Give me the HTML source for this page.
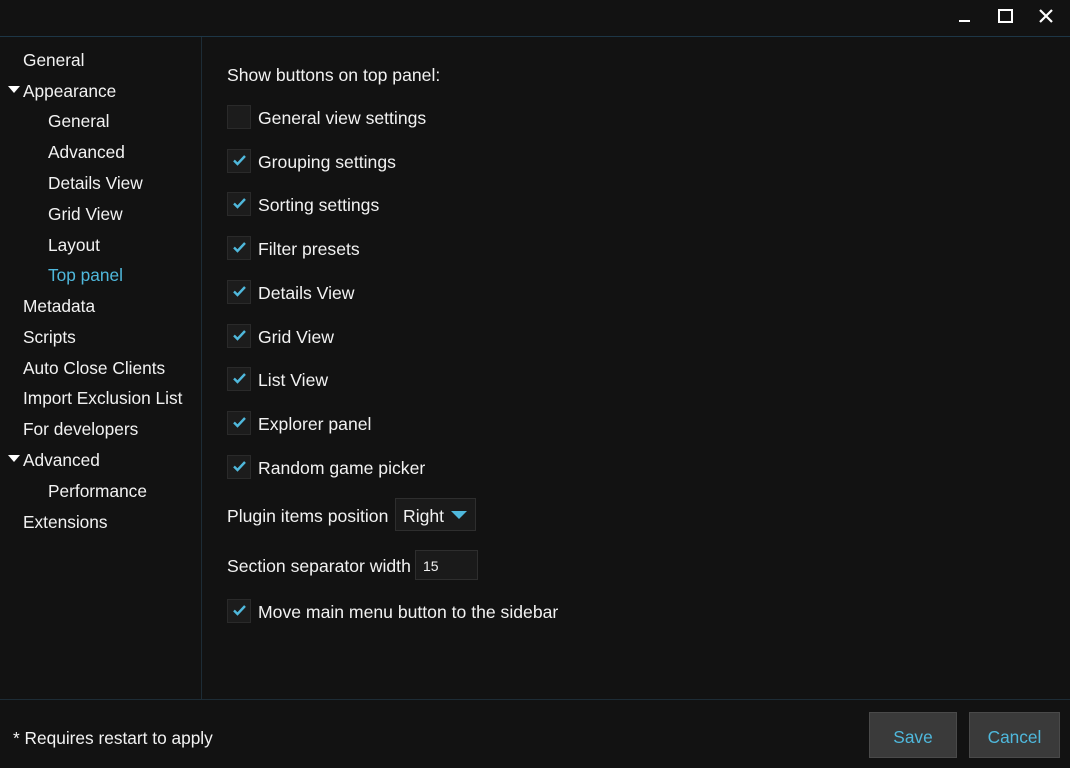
<!DOCTYPE html>
<html><head><style>
*{margin:0;padding:0;box-sizing:border-box}
body{width:1070px;height:768px;background:#121212;color:#f2f2f2;font-family:"Liberation Sans",sans-serif;font-size:17.3px;position:relative;overflow:hidden}
.a{position:absolute;white-space:nowrap;line-height:20px}
.m{font-size:17.6px}
.cb{position:absolute;left:227px;width:24px;height:24px;background:#1c1c1c;border:1px solid #2a2a2a}
.cb svg{position:absolute;left:5px;top:5px}
.btn{position:absolute;top:712px;height:46px;background:#3a3a3a;border:1px solid #4a4a4a;color:#4fb8dc;text-align:center;line-height:48px}
</style></head><body>
<div style="position:absolute;left:0;top:36px;width:1070px;height:1px;background:#1d3646"></div>
<div style="position:absolute;left:201px;top:37px;width:1px;height:662px;background:#1d2c36"></div>
<div style="position:absolute;left:0;top:699px;width:1070px;height:1px;background:#1d2c36"></div>
<div style="position:absolute;left:959px;top:20px;width:11px;height:2px;background:#fff"></div>
<div style="position:absolute;left:998px;top:9px;width:15px;height:14px;border:2px solid #fff"></div>
<svg style="position:absolute;left:1039px;top:9px" width="14" height="14"><path d="M1 1L13 13M13 1L1 13" stroke="#fff" stroke-width="2.2"/></svg>
<div class="a" style="left:23px;top:50px">General</div>
<svg style="position:absolute;left:8px;top:86px" width="12" height="8"><path d="M0 0H12L6 7Z" fill="#fff"/></svg>
<div class="a" style="left:23px;top:81px">Appearance</div>
<div class="a" style="left:48px;top:111px">General</div>
<div class="a" style="left:48px;top:142px">Advanced</div>
<div class="a" style="left:48px;top:173px">Details View</div>
<div class="a" style="left:48px;top:204px">Grid View</div>
<div class="a" style="left:48px;top:235px">Layout</div>
<div class="a" style="left:48px;top:265px;color:#4fb8dc">Top panel</div>
<div class="a" style="left:23px;top:296px">Metadata</div>
<div class="a" style="left:23px;top:327px">Scripts</div>
<div class="a" style="left:23px;top:358px">Auto Close Clients</div>
<div class="a" style="left:23px;top:388px">Import Exclusion List</div>
<div class="a" style="left:23px;top:419px">For developers</div>
<svg style="position:absolute;left:8px;top:455px" width="12" height="8"><path d="M0 0H12L6 7Z" fill="#fff"/></svg>
<div class="a" style="left:23px;top:450px">Advanced</div>
<div class="a" style="left:48px;top:481px">Performance</div>
<div class="a" style="left:23px;top:512px">Extensions</div>

<div class="a m" style="left:227px;top:65px">Show buttons on top panel:</div>
<div class="cb" style="top:105px"></div><div class="a m" style="left:258px;top:108px">General view settings</div>
<div class="cb" style="top:149px"><svg width="13" height="11"><path d="M1 5.5L4.5 9L12 1" stroke="#4fb8dc" stroke-width="2.4" fill="none"/></svg></div><div class="a m" style="left:258px;top:152px">Grouping settings</div>
<div class="cb" style="top:192px"><svg width="13" height="11"><path d="M1 5.5L4.5 9L12 1" stroke="#4fb8dc" stroke-width="2.4" fill="none"/></svg></div><div class="a m" style="left:258px;top:195px">Sorting settings</div>
<div class="cb" style="top:236px"><svg width="13" height="11"><path d="M1 5.5L4.5 9L12 1" stroke="#4fb8dc" stroke-width="2.4" fill="none"/></svg></div><div class="a m" style="left:258px;top:239px">Filter presets</div>
<div class="cb" style="top:280px"><svg width="13" height="11"><path d="M1 5.5L4.5 9L12 1" stroke="#4fb8dc" stroke-width="2.4" fill="none"/></svg></div><div class="a m" style="left:258px;top:283px">Details View</div>
<div class="cb" style="top:324px"><svg width="13" height="11"><path d="M1 5.5L4.5 9L12 1" stroke="#4fb8dc" stroke-width="2.4" fill="none"/></svg></div><div class="a m" style="left:258px;top:327px">Grid View</div>
<div class="cb" style="top:367px"><svg width="13" height="11"><path d="M1 5.5L4.5 9L12 1" stroke="#4fb8dc" stroke-width="2.4" fill="none"/></svg></div><div class="a m" style="left:258px;top:370px">List View</div>
<div class="cb" style="top:411px"><svg width="13" height="11"><path d="M1 5.5L4.5 9L12 1" stroke="#4fb8dc" stroke-width="2.4" fill="none"/></svg></div><div class="a m" style="left:258px;top:414px">Explorer panel</div>
<div class="cb" style="top:455px"><svg width="13" height="11"><path d="M1 5.5L4.5 9L12 1" stroke="#4fb8dc" stroke-width="2.4" fill="none"/></svg></div><div class="a m" style="left:258px;top:458px">Random game picker</div>
<div class="a m" style="left:227px;top:506px">Plugin items position</div>
<div style="position:absolute;left:395px;top:498px;width:81px;height:33px;background:#1a1a1a;border:1px solid #2e2e2e"></div>
<div class="a m" style="left:403px;top:506px">Right</div>
<svg style="position:absolute;left:451px;top:511px" width="16" height="9"><path d="M0 0H16L8 8Z" fill="#4fb8dc"/></svg>
<div class="a m" style="left:227px;top:556px">Section separator width</div>
<div style="position:absolute;left:415px;top:550px;width:63px;height:30px;background:#1a1a1a;border:1px solid #2e2e2e"></div>
<div class="a" style="left:423px;top:556px;font-size:14px">15</div>
<div class="cb" style="top:599px"><svg width="13" height="11"><path d="M1 5.5L4.5 9L12 1" stroke="#4fb8dc" stroke-width="2.4" fill="none"/></svg></div><div class="a m" style="left:258px;top:602px">Move main menu button to the sidebar</div>

<div class="a" style="left:13px;top:728px">* Requires restart to apply</div>
<div class="btn" style="left:869px;width:88px">Save</div>
<div class="btn" style="left:969px;width:91px">Cancel</div>
</body></html>
